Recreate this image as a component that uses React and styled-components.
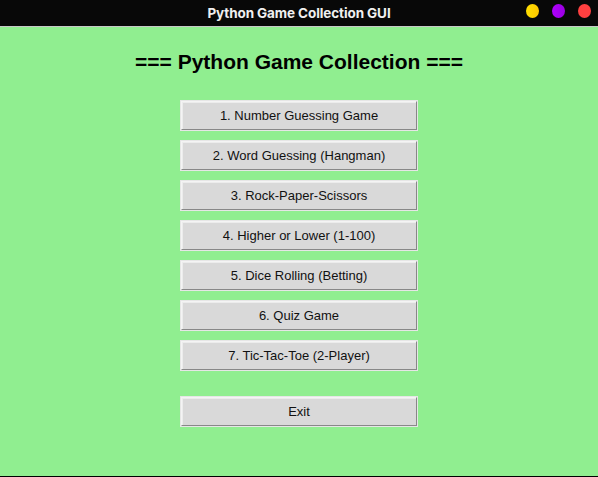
import React from 'react';
import styled, { createGlobalStyle } from 'styled-components';

const GlobalStyle = createGlobalStyle`
  html, body {
    margin: 0;
    padding: 0;
    background: #000;
  }
`;

const Window = styled.div`
  width: 598px;
  height: 477px;
  display: flex;
  flex-direction: column;
  background: #000;
  overflow: hidden;
`;

const TitleBar = styled.div`
  height: 26px;
  flex-shrink: 0;
  background: #080808;
  border-bottom: 1px solid #c8c8c8;
  position: relative;
  display: flex;
  align-items: center;
  justify-content: center;
`;

const TitleText = styled.span`
  font-family: Inter, "Noto Sans", sans-serif;
  font-weight: 700;
  font-size: 13.5px;
  color: #f0f0f0;
  letter-spacing: -0.1px;
`;

const Controls = styled.div`
  position: absolute;
  right: 7px;
  top: 4px;
  display: flex;
  gap: 13px;
`;

const Dot = styled.span`
  width: 13px;
  height: 14px;
  border-radius: 50%;
  background: ${p => p.$color};
`;

const Body = styled.div`
  flex: 1;
  background: #90ee90;
  margin-bottom: 1px;
  display: flex;
  flex-direction: column;
  align-items: center;
  padding-top: 22px;
`;

const Heading = styled.h1`
  margin: 0 0 27px;
  font-family: "Liberation Sans", Arial, sans-serif;
  font-weight: 700;
  font-size: 21px;
  line-height: 25px;
  color: #000;
`;

const ButtonList = styled.div`
  display: flex;
  flex-direction: column;
  gap: 11px;
`;

const GameButton = styled.button`
  width: 236px;
  height: 29px;
  box-sizing: border-box;
  margin: ${p => (p.$spaced ? '16px 0 0' : '0')};
  padding: 0;
  background: #d9d9d9;
  border: 1px solid #f4f4f4;
  border-right-color: #888;
  border-bottom-color: #888;
  outline: 1px solid #e6e6e6;
  outline-offset: 0;
  box-shadow: inset 1px 1px 0 #ececec;
  font-family: "Liberation Sans", Arial, sans-serif;
  font-size: 13px;
  color: #111;
  cursor: pointer;
`;

const games = [
  '1. Number Guessing Game',
  '2. Word Guessing (Hangman)',
  '3. Rock-Paper-Scissors',
  '4. Higher or Lower (1-100)',
  '5. Dice Rolling (Betting)',
  '6. Quiz Game',
  '7. Tic-Tac-Toe (2-Player)',
];

export default function App() {
  return (
    <>
      <GlobalStyle />
      <Window>
        <TitleBar>
          <TitleText>Python Game Collection GUI</TitleText>
          <Controls>
            <Dot $color="linear-gradient(90deg, #ffe000, #ffc800)" />
            <Dot $color="linear-gradient(90deg, #b000ff, #9a00e0)" />
            <Dot $color="#ff4040" />
          </Controls>
        </TitleBar>
        <Body>
          <Heading>=== Python Game Collection ===</Heading>
          <ButtonList>
            {games.map(g => (
              <GameButton key={g}>{g}</GameButton>
            ))}
            <GameButton $spaced>Exit</GameButton>
          </ButtonList>
        </Body>
      </Window>
    </>
  );
}
